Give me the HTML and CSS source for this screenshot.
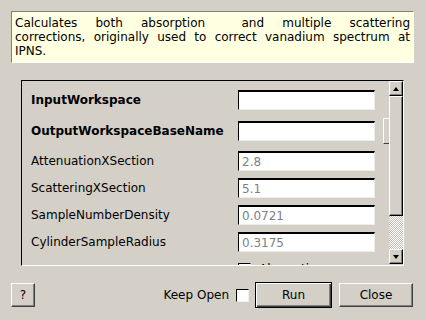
FILE: index.html
```html
<!DOCTYPE html>
<html lang="en">
<head>
  <meta charset="UTF-8">
  <title>MultipleScatteringCylinderAbsorption</title>
  <link rel="stylesheet" href="styles.css">
</head>
<body>

<div class="dialog">
  <div class="summary">
    <span class="line">Calculates both absorption&nbsp; and multiple scattering</span>
    <span class="line">corrections, originally used to correct vanadium spectrum at</span>
    <span class="line last">IPNS.</span>
  </div>

  <div class="props">
    <div class="viewport">
      <div class="row">
        <label class="name req">InputWorkspace</label>
        <input class="field" type="text">
      </div>
      <div class="row tall">
        <label class="name req">OutputWorkspaceBaseName</label>
        <input class="field" type="text">
        <button class="browse"></button>
      </div>
      <div class="row">
        <label class="name">AttenuationXSection</label>
        <input class="field" type="text" placeholder="2.8">
      </div>
      <div class="row">
        <label class="name">ScatteringXSection</label>
        <input class="field" type="text" placeholder="5.1">
      </div>
      <div class="row">
        <label class="name">SampleNumberDensity</label>
        <input class="field" type="text" placeholder="0.0721">
      </div>
      <div class="row">
        <label class="name">CylinderSampleRadius</label>
        <input class="field" type="text" placeholder="0.3175">
      </div>
      <div class="row">
        <span class="name"></span>
        <span class="check"></span>
        <span class="check-text">Absorption</span>
      </div>
    </div>
    <div class="scrollbar">
      <div class="arrow"><span class="tri up"></span></div>
      <div class="thumb"></div>
      <div class="trough"></div>
      <div class="arrow"><span class="tri down"></span></div>
    </div>
  </div>

  <div class="buttons">
    <button class="btn help">?</button>
    <span class="keep">Keep Open</span>
    <span class="check"></span>
    <button class="btn run">Run</button>
    <button class="btn close">Close</button>
  </div>
</div>

</body>
</html>
```

FILE: styles.css
```css
body {
  margin: 0;
  background: #d4d0c8;
  color: #000;
  font: 12px "DejaVu Sans", sans-serif;
}

.dialog {
  display: flex;
  flex-direction: column;
  height: 320px;
  padding-top: 11px;
  box-sizing: border-box;
}

.summary {
  margin: 0 12px 0 11px;
  height: 52px;
  box-sizing: border-box;
  padding: 4px 3px;
  background: #ffffe1;
  border: 1px solid;
  border-color: #808080 #fff #fff #808080;
  line-height: 14px;
}

.line {
  display: block;
  white-space: nowrap;
  text-align: justify;
  text-align-last: justify;
}

.line.last {
  text-align-last: left;
}

.props {
  display: flex;
  margin: 17px 22px 0 21px;
  height: 186px;
  box-sizing: border-box;
  border: 1px solid;
  border-color: #000 #fff #fff #000;
}

.viewport {
  flex: 1;
  min-width: 0;
  overflow: hidden;
  display: flex;
  flex-direction: column;
  gap: 7px;
  padding: 9px 0 0 9px;
}

.row {
  display: flex;
  align-items: center;
  flex-shrink: 0;
  height: 20px;
}

.row.tall {
  height: 27px;
}

.name {
  width: 207px;
  flex-shrink: 0;
  white-space: nowrap;
}

.req {
  font-weight: bold;
}

.field {
  width: 137px;
  height: 20px;
  flex-shrink: 0;
  box-sizing: border-box;
  margin: 0;
  padding: 0 3px;
  background: #fff;
  border: 1px solid;
  border-top-width: 2px;
  border-color: #000 #ececec #ececec #000;
  font: inherit;
  outline: none;
}

.field::placeholder {
  color: #808080;
}

.browse {
  flex-shrink: 0;
  width: 60px;
  height: 26px;
  margin-left: 8px;
  padding: 0;
  background: #d4d0c8;
  border: 1px solid;
  border-color: #fff #404040 #404040 #fff;
}

.check {
  width: 13px;
  height: 13px;
  flex-shrink: 0;
  box-sizing: border-box;
  background: #fff;
  border: 1px solid;
  border-color: #000 #f0f0f0 #f0f0f0 #000;
}

.check-text {
  margin-left: 8px;
  white-space: nowrap;
}

.scrollbar {
  width: 14px;
  display: flex;
  flex-direction: column;
  padding-bottom: 1px;
}

.arrow,
.thumb {
  box-sizing: border-box;
  background: #d4d0c8;
  border: 1px solid;
  border-color: #fff #000 #000 #fff;
  box-shadow: inset -1px -1px #808080;
}

.arrow {
  height: 15px;
  display: flex;
  align-items: center;
  justify-content: center;
}

.thumb {
  height: 120px;
}

.trough {
  flex: 1;
  background: repeating-conic-gradient(#fff 0 25%, #c4c0b8 0 50%) 0 0 / 2px 2px;
}

.tri {
  width: 0;
  height: 0;
  border-left: 3px solid transparent;
  border-right: 3px solid transparent;
}

.tri.up {
  border-bottom: 4px solid #000;
}

.tri.down {
  border-top: 4px solid #000;
}

.buttons {
  display: flex;
  align-items: center;
  height: 26px;
  margin-top: 16px;
  padding: 0 13px 0 11px;
}

.btn {
  box-sizing: border-box;
  margin: 0;
  padding: 0;
  background: #d4d0c8;
  color: #000;
  font: inherit;
  border: 1px solid;
  border-color: #fff #404040 #404040 #fff;
  box-shadow: inset -1px -1px #808080;
}

.help {
  width: 24px;
  height: 24px;
}

.keep {
  margin-left: auto;
  margin-right: 7px;
}

.run {
  width: 77px;
  height: 26px;
  margin-left: 6px;
  border-color: #000;
  box-shadow: inset 1px 1px #fff, inset -1px -1px #404040, inset -2px -2px #808080;
}

.close {
  width: 74px;
  height: 24px;
  margin-left: 7px;
}
```
